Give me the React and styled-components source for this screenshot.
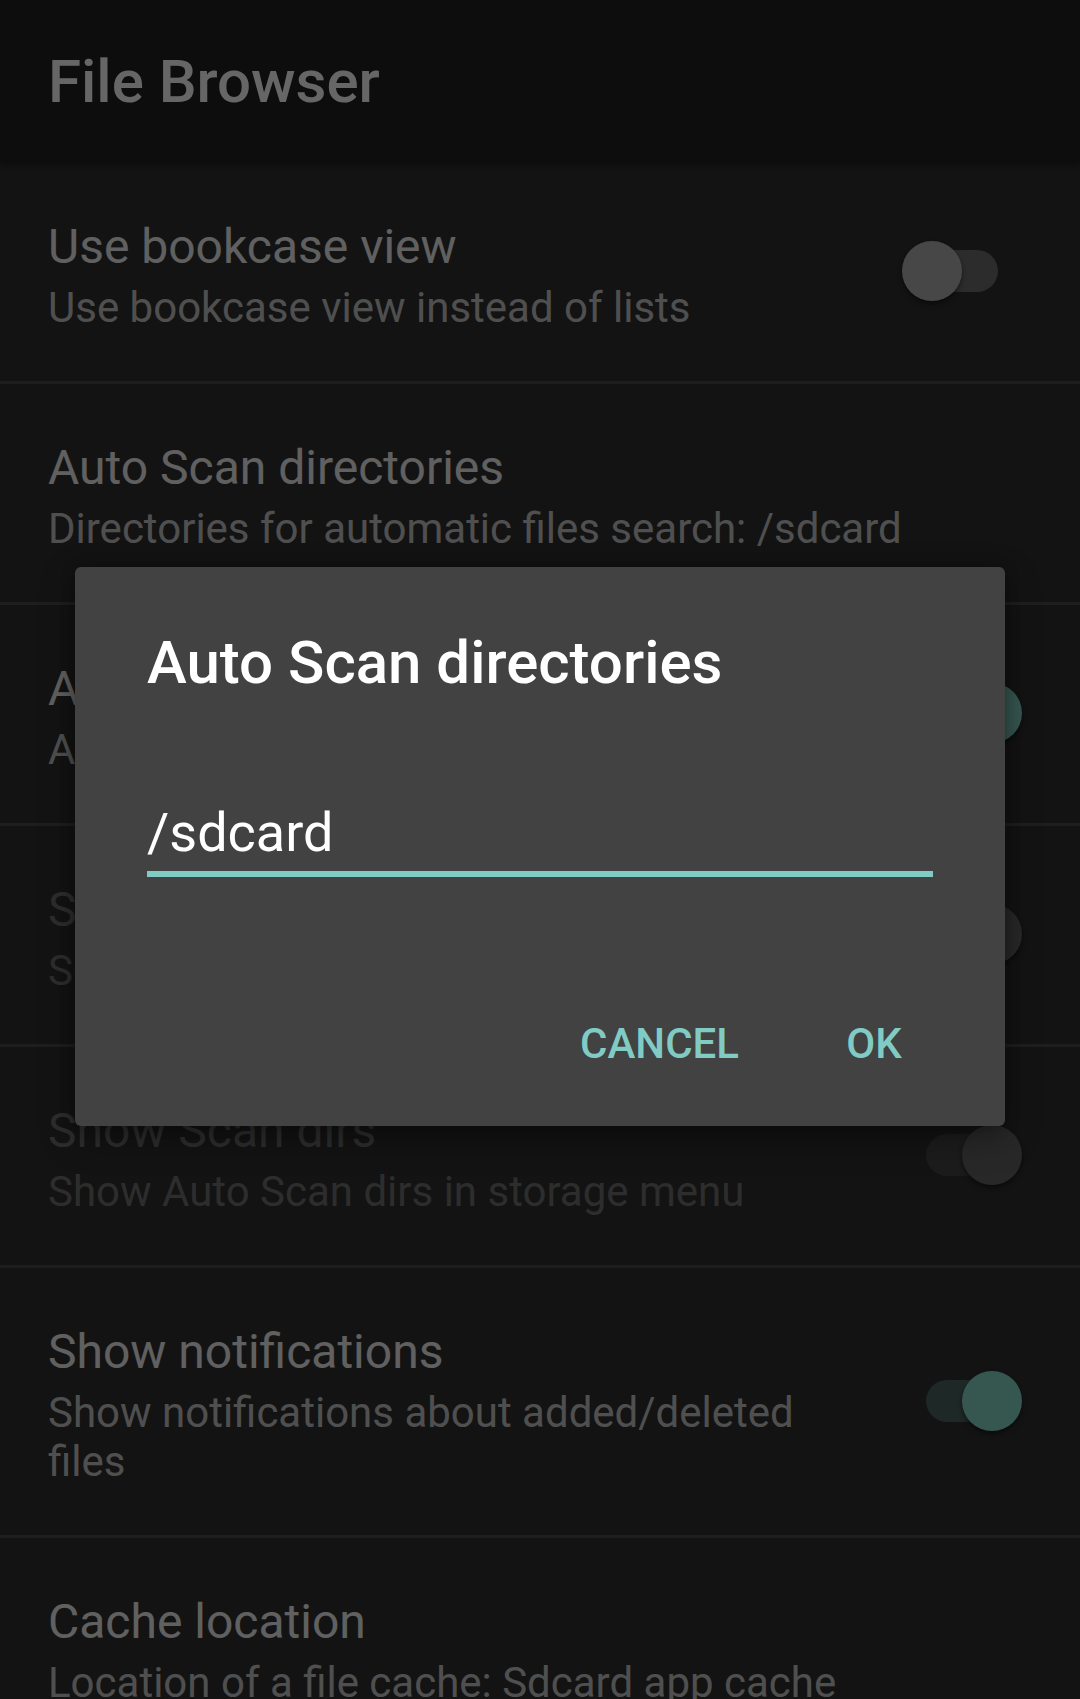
import React from "react";
import styled, { createGlobalStyle } from "styled-components";

const Global = createGlobalStyle`
  html, body { margin: 0; padding: 0; height: 100%; overflow: hidden; background: #303030; }
  body { font-family: Roboto, "Noto Sans", "Liberation Sans", sans-serif; -webkit-font-smoothing: antialiased; }
  * { box-sizing: border-box; }
`;

const Screen = styled.div`
  width: 1080px;
  height: 1699px;
  background: #303030;
  overflow: hidden;
  position: relative;
`;

const Toolbar = styled.header`
  height: 163px;
  display: flex;
  align-items: center;
  padding-left: 48px;
  background: #212121;
  color: #ffffff;
  font-size: 60px;
  font-weight: 500;
  position: relative;
  z-index: 1;
  box-shadow: 0 2px 6px rgba(0, 0, 0, 0.35);
`;

const List = styled.div`
  display: flex;
  flex-direction: column;
`;

const Row = styled.div`
  display: flex;
  align-items: center;
  padding: 56px ${(p) => p.$padRight}px 49px 48px;
  border-bottom: 3px solid #4d4d4d;
`;

const TextCol = styled.div`
  flex: 1;
  min-width: 0;
  padding-right: ${(p) => (p.$withWidget ? 48 : 0)}px;
  display: flex;
  flex-direction: column;
  gap: 8px;
`;

const Title = styled.div`
  font-size: 48px;
  line-height: 56px;
  color: ${(p) => (p.$disabled ? "#707070" : "#f0f0f0")};
  white-space: nowrap;
`;

const Summary = styled.div`
  font-size: 42px;
  line-height: 49px;
  color: ${(p) => (p.$disabled ? "#707070" : "#c6c6c6")};
`;

const SwitchFrame = styled.div`
  position: relative;
  width: 106px;
  height: 60px;
  flex-shrink: 0;
  margin-top: -9px;
`;

const Track = styled.div`
  position: absolute;
  left: 10px;
  right: 10px;
  top: 9px;
  height: 42px;
  border-radius: 21px;
  background: ${(p) => p.$color};
`;

const Thumb = styled.div`
  position: absolute;
  top: 0;
  left: ${(p) => (p.$on ? 46 : 0)}px;
  width: 60px;
  height: 60px;
  border-radius: 50%;
  background: ${(p) => p.$color};
  box-shadow: 0 3px 5px rgba(0, 0, 0, 0.45);
`;

const Overlay = styled.div`
  position: absolute;
  inset: 0;
  background: rgba(0, 0, 0, 0.6);
  z-index: 5;
  display: flex;
  align-items: center;
  justify-content: center;
  padding-bottom: 6px;
`;

const Dialog = styled.div`
  width: 930px;
  background: #424242;
  border-radius: 6px;
  padding: 61px 0 29px;
  box-shadow: 0 12px 34px rgba(0, 0, 0, 0.35), 0 0 14px rgba(0, 0, 0, 0.25);
  display: flex;
  flex-direction: column;
`;

const DialogTitle = styled.h2`
  margin: 0 72px;
  font-size: 60px;
  line-height: 70px;
  font-weight: 500;
  color: #ffffff;
`;

const Field = styled.input`
  margin: 103px 72px 0;
  width: calc(100% - 144px);
  height: 76px;
  padding: 0 0 7px;
  background: transparent;
  border: none;
  border-bottom: 6px solid #80cbc4;
  outline: none;
  color: #ffffff;
  font-family: inherit;
  font-size: 54px;
  line-height: 63px;
`;

const ButtonBar = styled.div`
  margin-top: 112px;
  display: flex;
  justify-content: flex-end;
  gap: 15px;
  padding-right: 35px;
`;

const TextButton = styled.button`
  min-width: 192px;
  height: 108px;
  padding: 0 24px;
  background: transparent;
  border: none;
  color: #80cbc4;
  font-family: inherit;
  font-size: 42px;
  font-weight: 500;
  text-transform: uppercase;
`;

const SWITCH = {
  off: { track: "#6e6e6e", thumb: "#b2b2b2", on: false },
  on: { track: "#4b645f", thumb: "#88d8c8", on: true },
  disabledOn: { track: "#464646", thumb: "#646464", on: true },
};

function Switch({ state }) {
  const s = SWITCH[state];
  return (
    <SwitchFrame>
      <Track $color={s.track} />
      <Thumb $color={s.thumb} $on={s.on} />
    </SwitchFrame>
  );
}

const prefs = [
  { title: "Use bookcase view", summary: "Use bookcase view instead of lists", sw: "off", padRight: 72 },
  { title: "Auto Scan directories", summary: "Directories for automatic files search: /sdcard" },
  { title: "Auto Scan on start", summary: "Auto Scan directories on start", sw: "on" },
  { title: "Scan subdirectories", summary: "Scan subdirectories too", sw: "disabledOn", disabled: true },
  { title: "Show Scan dirs", summary: "Show Auto Scan dirs in storage menu", sw: "disabledOn", disabled: true },
  { title: "Show notifications", summary: "Show notifications about added/deleted files", sw: "on" },
  { title: "Cache location", summary: "Location of a file cache: Sdcard app cache" },
];

export default function App() {
  return (
    <Screen>
      <Global />
      <Toolbar>File Browser</Toolbar>
      <List>
        {prefs.map((p) => (
          <Row key={p.title} $padRight={p.padRight ?? 58}>
            <TextCol $withWidget={!!p.sw}>
              <Title $disabled={p.disabled}>{p.title}</Title>
              <Summary $disabled={p.disabled}>{p.summary}</Summary>
            </TextCol>
            {p.sw && <Switch state={p.sw} />}
          </Row>
        ))}
      </List>
      <Overlay>
        <Dialog>
          <DialogTitle>Auto Scan directories</DialogTitle>
          <Field defaultValue="/sdcard" readOnly />
          <ButtonBar>
            <TextButton>Cancel</TextButton>
            <TextButton>OK</TextButton>
          </ButtonBar>
        </Dialog>
      </Overlay>
    </Screen>
  );
}
